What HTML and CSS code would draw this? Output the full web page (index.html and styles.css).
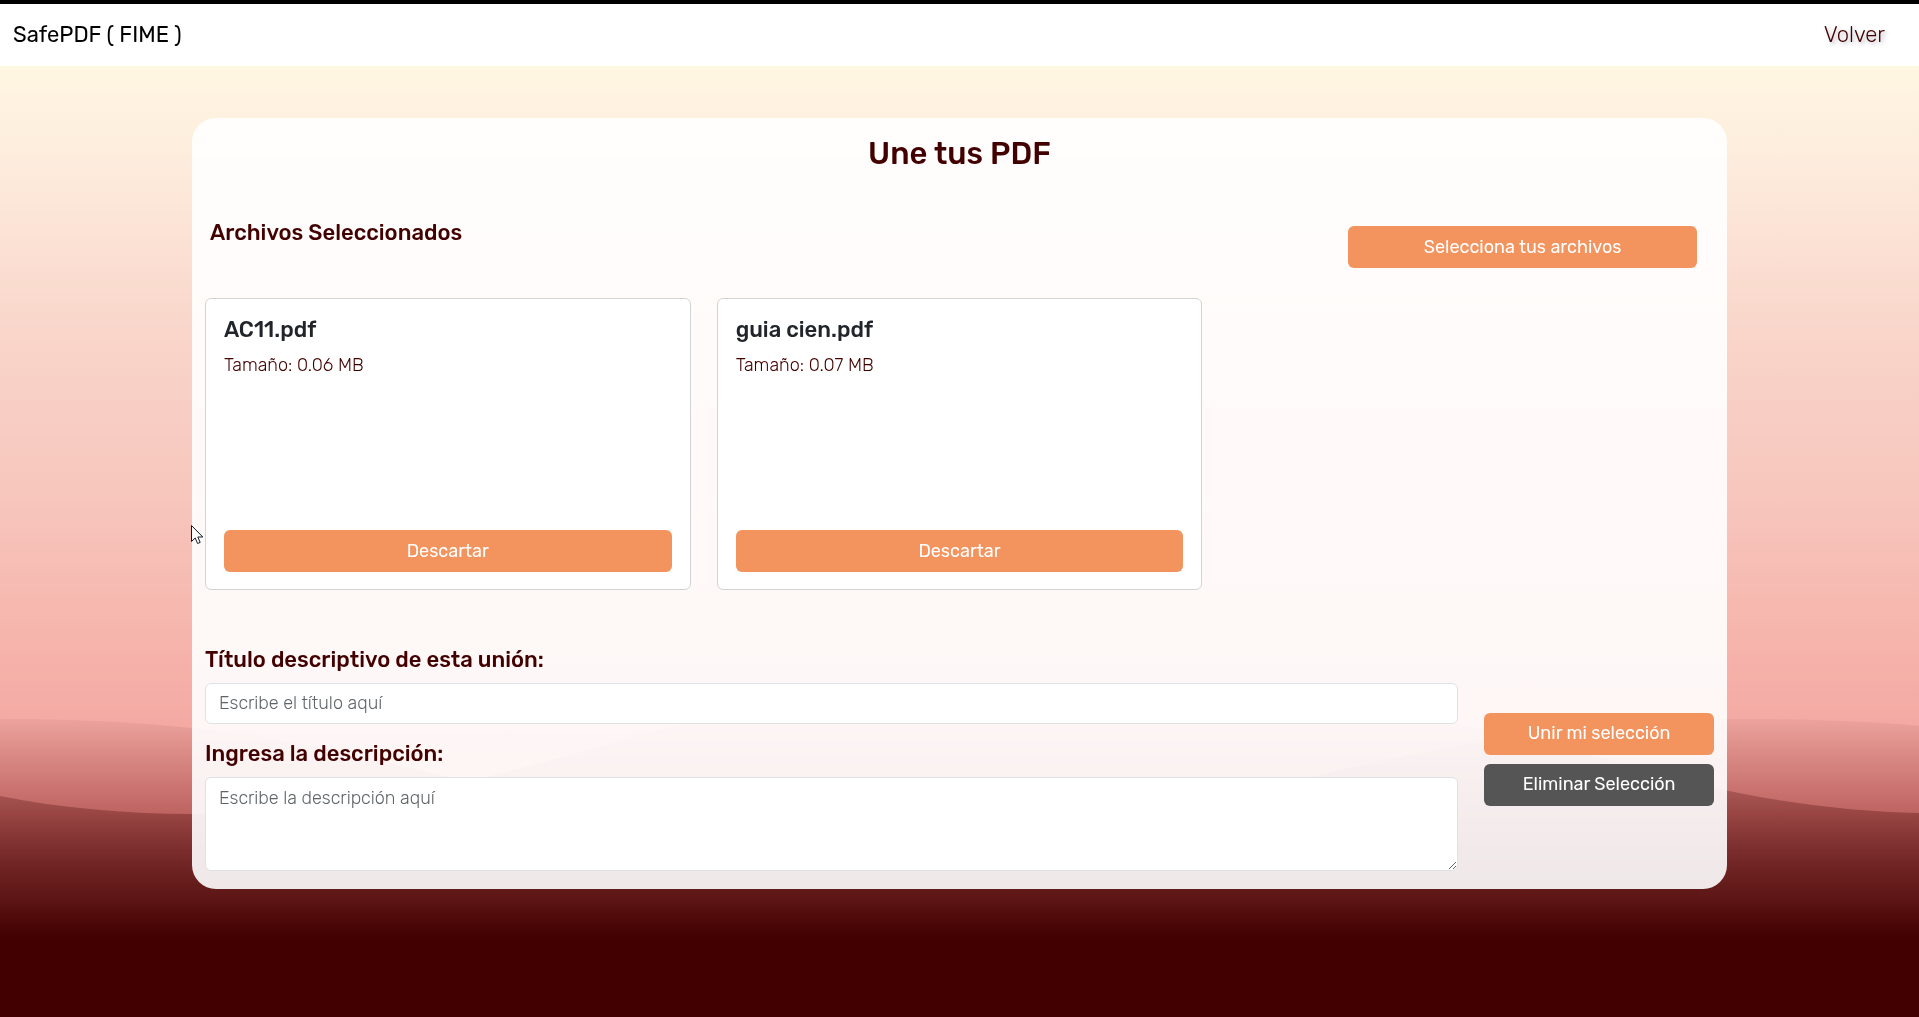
FILE: index.html
```html
<!DOCTYPE html>
<html lang="es">
<head>
<meta charset="utf-8">
<meta name="viewport" content="width=device-width, initial-scale=1">
<title>SafePDF - Une tus PDF</title>
<link rel="stylesheet" href="styles.css">
</head>
<body>
<svg class="waves" viewBox="0 0 1919 1017" preserveAspectRatio="none" aria-hidden="true">
  <defs>
    <linearGradient id="wave" gradientUnits="userSpaceOnUse" x1="0" y1="680" x2="0" y2="940">
      <stop offset="0" stop-color="#420000" stop-opacity="0"/>
      <stop offset=".16" stop-color="#420000" stop-opacity=".05"/>
      <stop offset=".51" stop-color="#420000" stop-opacity=".3"/>
      <stop offset=".69" stop-color="#420000" stop-opacity=".47"/>
      <stop offset=".85" stop-color="#420000" stop-opacity=".62"/>
      <stop offset=".98" stop-color="#420000" stop-opacity=".86"/>
      <stop offset="1" stop-color="#420000" stop-opacity="1"/>
    </linearGradient>
  </defs>
  <path fill="url(#wave)" d="M0 719C70 719 135 722 192 728C300 740 380 760 449 777C600 820 780 850 960 840C1150 830 1250 790 1340 770C1480 739 1600 719 1728 719C1800 719 1865 721 1919 726V1017H0Z"/>
  <path fill="url(#wave)" d="M0 796C60 808 130 814 192 814C310 814 400 797 486 777C560 759 640 734 683 724C800 695 920 681 1050 681C1200 681 1340 700 1463 725C1570 747 1650 773 1724 790C1790 804 1860 812 1919 813V1017H0Z"/>
</svg>
<header class="navbar">
  <a class="brand" href="#">SafePDF ( FIME )</a>
  <nav><a class="back" href="#">Volver</a></nav>
</header>
<main class="panel">
  <h1>Une tus PDF</h1>
  <section class="toolbar">
    <h2>Archivos Seleccionados</h2>
    <button class="btn select" type="button">Selecciona tus archivos</button>
  </section>
  <section class="files">
    <article class="card">
      <h3>AC11.pdf</h3>
      <p>Tamaño: 0.06 MB</p>
      <button class="btn" type="button">Descartar</button>
    </article>
    <article class="card">
      <h3>guia cien.pdf</h3>
      <p>Tamaño: 0.07 MB</p>
      <button class="btn" type="button">Descartar</button>
    </article>
  </section>
  <form class="merge">
    <div class="fields">
      <label for="titulo">Título descriptivo de esta unión:</label>
      <input id="titulo" type="text" placeholder="Escribe el título aquí">
      <label for="descripcion">Ingresa la descripción:</label>
      <textarea id="descripcion" placeholder="Escribe la descripción aquí"></textarea>
    </div>
    <div class="actions">
      <button class="btn" type="button">Unir mi selección</button>
      <button class="btn dark" type="button">Eliminar Selección</button>
    </div>
  </form>
</main>
<svg class="cursor" width="13" height="20" viewBox="0 0 13 20" aria-hidden="true">
  <path d="M.5 .5V16.500L4.200 13L6.600 18.500L9.200 17.400L6.800 12H11.800Z" fill="#fff" stroke="#111827"/>
</svg>
</body>
</html>
```
FILE: styles.css
```css
* { box-sizing: border-box; }

body {
  margin: 0;
  min-height: 100vh;
  font-family: Rubik, Inter, sans-serif;
  font-size: 18px;
  font-weight: 300;
  line-height: 26px;
  color: #420000;
  background: linear-gradient(#fff7e2 6%, #fdeddd 15%, #f9d4c9 34%, #f7c6bd 49%, #f6b7ae 61%, #f4aaa4 71%, #f4908c 80%) fixed;
}

.waves {
  position: fixed;
  inset: 0;
  z-index: -1;
  width: 100%;
  height: 100%;
}

.navbar {
  display: flex;
  justify-content: space-between;
  align-items: center;
  padding: 16px 34px 16px 13px;
  border-top: 4px solid #000;
  background: #fff;
  font-size: 22px;
  line-height: 30px;
}

.navbar a { text-decoration: none; }
.brand { color: #000; font-weight: 400; }
.back {
  color: #420000;
  font-weight: 300;
  text-shadow: 2px 2px 4px rgba(0, 0, 60, .3);
}

.panel {
  width: 80%;
  margin: 52px auto;
  padding: 18px 13px;
  border-radius: 24px;
  background: rgba(255, 255, 255, .9);
}

h1, h2, h3, p { margin: 0; font-weight: 500; }
h1 { font-size: 31px; line-height: 36px; text-align: center; }
h2, h3, label { font-size: 22px; line-height: 26px; font-weight: 500; }

.toolbar {
  display: flex;
  justify-content: space-between;
  align-items: flex-start;
  margin-top: 48px;
  padding: 0 17px 0 5px;
}
.toolbar .select { width: 349px; margin-top: 6px; }

.btn {
  height: 42px;
  padding: 0 18px 1px;
  border: 0;
  border-radius: 6px;
  background: #f3935d;
  color: #fff;
  font: inherit;
  font-weight: 400;
}
.btn.dark { background: #555; }

.files {
  display: grid;
  grid-template-columns: repeat(3, 1fr);
  gap: 26px;
  margin-top: 30px;
}
.card {
  display: flex;
  flex-direction: column;
  height: 292px;
  padding: 18px 18px 17px;
  border: 1px solid #d2d3d4;
  border-radius: 6px;
  background: #fff;
}
.card h3 { color: #212529; }
.card p { margin-top: 9px; font-weight: 300; }
.card .btn { margin-top: auto; }

.merge {
  display: flex;
  align-items: center;
  gap: 26px;
  margin-top: 57px;
}
.fields { display: flex; flex: 1; flex-direction: column; }
.fields input, .fields textarea {
  width: 100%;
  margin: 10px 0 0;
  padding: 7px 13px;
  border: 1px solid #dee2e6;
  border-radius: 6px;
  background: #fff;
  font: inherit;
}
.fields input { height: 41px; margin-bottom: 17px; padding-bottom: 8px; }
.fields textarea { height: 94px; resize: vertical; }
::placeholder { color: #5f6468; opacity: 1; }

.actions {
  display: flex;
  flex-direction: column;
  gap: 9px;
  width: 230px;
}

.cursor {
  position: absolute;
  top: 525px;
  left: 191px;
}
```
